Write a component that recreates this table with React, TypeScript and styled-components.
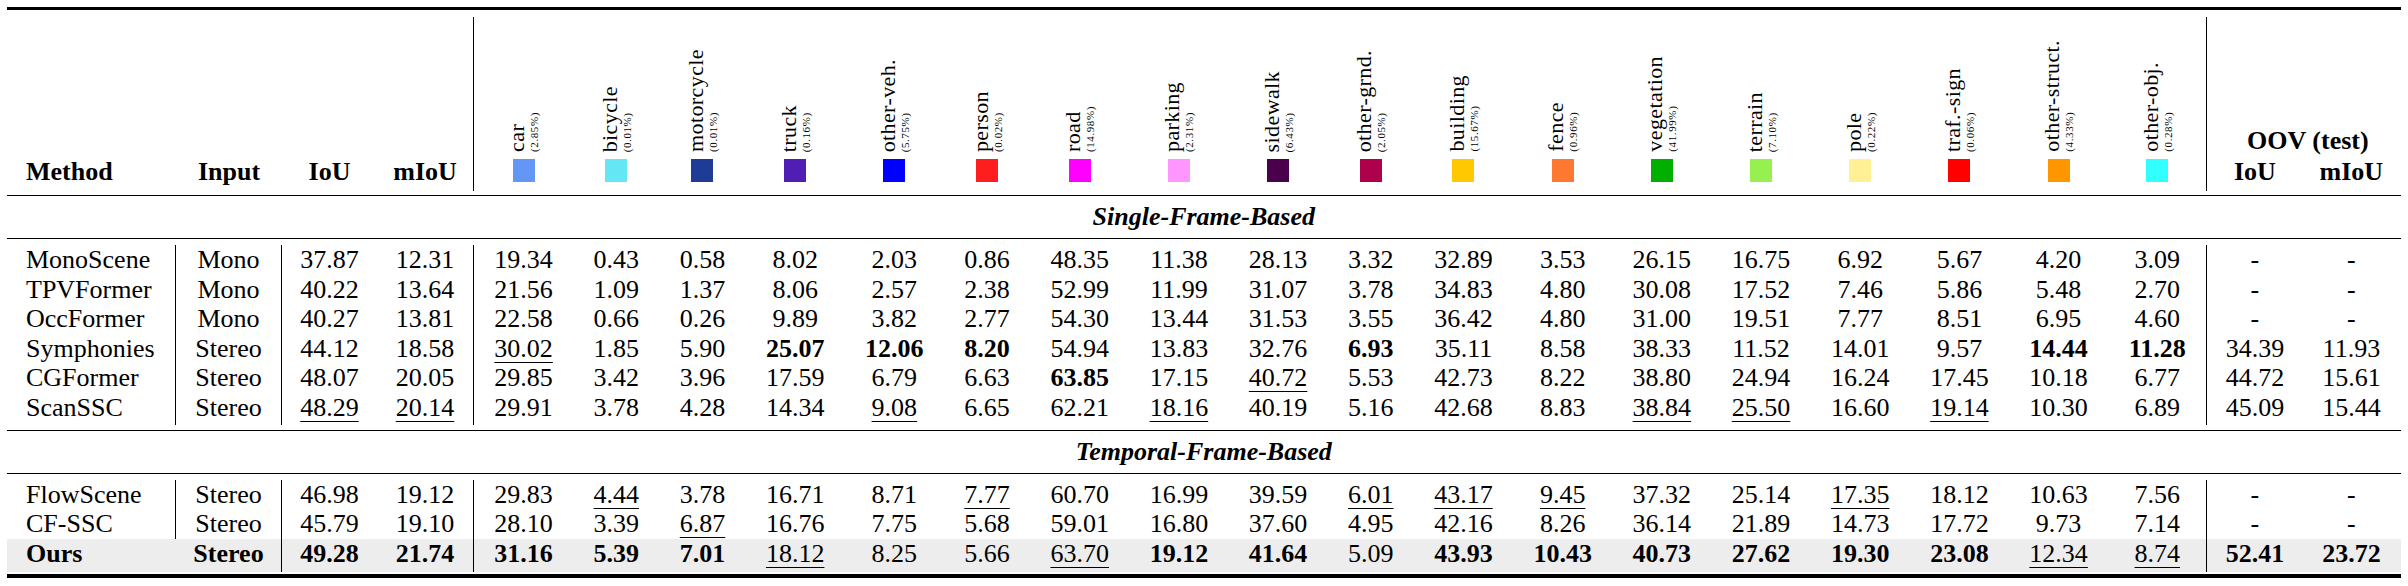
import React from "react";
import styled, { createGlobalStyle } from "styled-components";

const GlobalStyle = createGlobalStyle`
  html, body {
    margin: 0;
    padding: 0;
    background: #fff;
  }
  body {
    font-family: "Liberation Serif", "DejaVu Serif", serif;
    color: #000;
  }
`;

type ClassInfo = { name: string; pct: string; color: string; narrow?: boolean };

const classes: ClassInfo[] = [
  { name: "car", pct: "2.85", color: "#6496f5" },
  { name: "bicycle", pct: "0.01", color: "#64e6f5", narrow: true },
  { name: "motorcycle", pct: "0.01", color: "#1e3c96", narrow: true },
  { name: "truck", pct: "0.16", color: "#501eb4" },
  { name: "other-veh.", pct: "5.75", color: "#0000ff" },
  { name: "person", pct: "0.02", color: "#ff1e1e", narrow: true },
  { name: "road", pct: "14.98", color: "#ff00ff" },
  { name: "parking", pct: "2.31", color: "#ff96ff" },
  { name: "sidewalk", pct: "6.43", color: "#4b004b" },
  { name: "other-grnd.", pct: "2.05", color: "#af004b", narrow: true },
  { name: "building", pct: "15.67", color: "#ffc800" },
  { name: "fence", pct: "0.96", color: "#ff7832" },
  { name: "vegetation", pct: "41.99", color: "#00af00" },
  { name: "terrain", pct: "7.10", color: "#96f050" },
  { name: "pole", pct: "0.22", color: "#fff096" },
  { name: "traf.-sign", pct: "0.06", color: "#ff0000" },
  { name: "other-struct.", pct: "4.33", color: "#ff9600" },
  { name: "other-obj.", pct: "0.28", color: "#32ffff" },
];

// column widths: method, input, iou, miou, 18 classes, oov iou, oov miou
const WIDTHS = [169, 106, 95, 97, ...classes.map((c) => (c.narrow ? 86.2 : 99.2)), 95, 98];
const TEMPLATE = WIDTHS.map((w) => `${w}px`).join(" ");
const TOTAL = WIDTHS.reduce((a, b) => a + b, 0);

type Entry = {
  method: string;
  input: string;
  iou: string;
  miou: string;
  vals: string[];
  oov: [string, string];
};

// "b:" = bold, "u:" = underlined
const single: Entry[] = [
  {
    method: "MonoScene", input: "Mono", iou: "37.87", miou: "12.31",
    vals: ["19.34", "0.43", "0.58", "8.02", "2.03", "0.86", "48.35", "11.38", "28.13", "3.32", "32.89", "3.53", "26.15", "16.75", "6.92", "5.67", "4.20", "3.09"],
    oov: ["-", "-"],
  },
  {
    method: "TPVFormer", input: "Mono", iou: "40.22", miou: "13.64",
    vals: ["21.56", "1.09", "1.37", "8.06", "2.57", "2.38", "52.99", "11.99", "31.07", "3.78", "34.83", "4.80", "30.08", "17.52", "7.46", "5.86", "5.48", "2.70"],
    oov: ["-", "-"],
  },
  {
    method: "OccFormer", input: "Mono", iou: "40.27", miou: "13.81",
    vals: ["22.58", "0.66", "0.26", "9.89", "3.82", "2.77", "54.30", "13.44", "31.53", "3.55", "36.42", "4.80", "31.00", "19.51", "7.77", "8.51", "6.95", "4.60"],
    oov: ["-", "-"],
  },
  {
    method: "Symphonies", input: "Stereo", iou: "44.12", miou: "18.58",
    vals: ["u:30.02", "1.85", "5.90", "b:25.07", "b:12.06", "b:8.20", "54.94", "13.83", "32.76", "b:6.93", "35.11", "8.58", "38.33", "11.52", "14.01", "9.57", "b:14.44", "b:11.28"],
    oov: ["34.39", "11.93"],
  },
  {
    method: "CGFormer", input: "Stereo", iou: "48.07", miou: "20.05",
    vals: ["29.85", "3.42", "3.96", "17.59", "6.79", "6.63", "b:63.85", "17.15", "u:40.72", "5.53", "42.73", "8.22", "38.80", "24.94", "16.24", "17.45", "10.18", "6.77"],
    oov: ["44.72", "15.61"],
  },
  {
    method: "ScanSSC", input: "Stereo", iou: "u:48.29", miou: "u:20.14",
    vals: ["29.91", "3.78", "4.28", "14.34", "u:9.08", "6.65", "62.21", "u:18.16", "40.19", "5.16", "42.68", "8.83", "u:38.84", "u:25.50", "16.60", "u:19.14", "10.30", "6.89"],
    oov: ["45.09", "15.44"],
  },
];

const temporal: Entry[] = [
  {
    method: "FlowScene", input: "Stereo", iou: "46.98", miou: "19.12",
    vals: ["29.83", "u:4.44", "3.78", "16.71", "8.71", "u:7.77", "60.70", "16.99", "39.59", "u:6.01", "u:43.17", "u:9.45", "37.32", "25.14", "u:17.35", "18.12", "10.63", "7.56"],
    oov: ["-", "-"],
  },
  {
    method: "CF-SSC", input: "Stereo", iou: "45.79", miou: "19.10",
    vals: ["28.10", "3.39", "u:6.87", "16.76", "7.75", "5.68", "59.01", "16.80", "37.60", "4.95", "42.16", "8.26", "36.14", "21.89", "14.73", "17.72", "9.73", "7.14"],
    oov: ["-", "-"],
  },
];

const ours: Entry = {
  method: "b:Ours", input: "b:Stereo", iou: "b:49.28", miou: "b:21.74",
  vals: ["b:31.16", "b:5.39", "b:7.01", "u:18.12", "8.25", "5.66", "u:63.70", "b:19.12", "b:41.64", "5.09", "b:43.93", "b:10.43", "b:40.73", "b:27.62", "b:19.30", "b:23.08", "u:12.34", "u:8.74"],
  oov: ["b:52.41", "b:23.72"],
};

const Table = styled.div`
  width: ${TOTAL}px;
  margin: 7px 0 0 7px;
  font-family: "Liberation Serif", "DejaVu Serif", serif;
  font-size: 26px;
`;

const Rule = styled.div<{ $h: number }>`
  height: ${(p) => p.$h}px;
  background: #000;
`;

const HeadRow = styled.div`
  display: grid;
  grid-template-columns: ${TEMPLATE};
  padding: 7px 0 4px;
`;

const HeadCell = styled.div<{ $left?: boolean; $rule?: boolean }>`
  height: 174px;
  display: flex;
  flex-direction: column;
  justify-content: flex-end;
  align-items: ${(p) => (p.$left ? "flex-start" : "center")};
  padding: 0 0 4px ${(p) => (p.$left ? "19px" : "0")};
  box-sizing: border-box;
  border-right: ${(p) => (p.$rule ? "1px solid #000" : "none")};
  font-weight: 700;
  line-height: 30px;
`;

const ClassHead = styled.div<{ $rule?: boolean }>`
  height: 174px;
  display: flex;
  flex-direction: column;
  justify-content: flex-end;
  align-items: center;
  padding-bottom: 9px;
  box-sizing: border-box;
  border-right: ${(p) => (p.$rule ? "1px solid #000" : "none")};
`;

const Label = styled.div`
  writing-mode: vertical-rl;
  transform: rotate(180deg);
  display: flex;
  flex-direction: column;
  align-items: flex-start;
`;

const LabelName = styled.span`
  font-size: 22px;
  line-height: 22px;
  letter-spacing: 0.4px;
`;

const LabelPct = styled.span`
  font-size: 11px;
  line-height: 13px;
  letter-spacing: 0.6px;
`;

const Swatch = styled.div<{ $color: string }>`
  width: 22px;
  height: 23px;
  margin-top: 7px;
  background: ${(p) => p.$color};
`;

const OovHead = styled.div`
  grid-column: span 2;
  height: 174px;
  display: flex;
  flex-direction: column;
  justify-content: flex-end;
  padding-bottom: 4px;
  box-sizing: border-box;
  font-weight: 700;
  line-height: 30px;
  text-align: center;
`;

const OovTitle = styled.div`
  margin-bottom: 1px;
  padding-left: 8px;
`;

const OovSub = styled.div`
  display: grid;
  grid-template-columns: 95px 98px;
`;

const Section = styled.div`
  height: 42px;
  display: flex;
  align-items: center;
  justify-content: center;
  font-weight: 700;
  font-style: italic;
`;

const Block = styled.div<{ $top: number; $bottom: number }>`
  padding: ${(p) => p.$top}px 0 ${(p) => p.$bottom}px;
`;

const Row = styled.div<{ $shade?: boolean; $pb?: number }>`
  display: grid;
  grid-template-columns: ${TEMPLATE};
  background: ${(p) => (p.$shade ? "#ededed" : "transparent")};
  & > * {
    padding-bottom: ${(p) => p.$pb ?? 0}px;
  }
`;

const Cell = styled.div<{ $left?: boolean; $rule?: boolean }>`
  line-height: 29.6px;
  text-align: ${(p) => (p.$left ? "left" : "center")};
  padding-left: ${(p) => (p.$left ? "19px" : "0")};
  box-sizing: border-box;
  border-right: ${(p) => (p.$rule ? "1px solid #000" : "none")};
  white-space: nowrap;
`;

const Num = styled.span<{ $bold?: boolean; $under?: boolean }>`
  font-weight: ${(p) => (p.$bold ? 700 : 400)};
  text-decoration: ${(p) => (p.$under ? "underline" : "none")};
  text-decoration-thickness: 1px;
  text-underline-offset: 5px;
`;

const Val = ({ v }: { v: string }) => {
  const bold = v.startsWith("b:");
  const under = v.startsWith("u:");
  const text = bold || under ? v.slice(2) : v;
  return (
    <Num $bold={bold} $under={under}>
      {text}
    </Num>
  );
};

const DataRow = ({
  e,
  methodRule = true,
  shade,
  pb,
}: {
  e: Entry;
  methodRule?: boolean;
  shade?: boolean;
  pb?: number;
}) => (
  <Row $shade={shade} $pb={pb}>
    <Cell $left $rule={methodRule}>
      <Val v={e.method} />
    </Cell>
    <Cell $rule>
      <Val v={e.input} />
    </Cell>
    <Cell>
      <Val v={e.iou} />
    </Cell>
    <Cell $rule>
      <Val v={e.miou} />
    </Cell>
    {e.vals.map((v, i) => (
      <Cell key={i} $rule={i === e.vals.length - 1}>
        <Val v={v} />
      </Cell>
    ))}
    <Cell>
      <Val v={e.oov[0]} />
    </Cell>
    <Cell>
      <Val v={e.oov[1]} />
    </Cell>
  </Row>
);

export default function App() {
  return (
    <>
      <GlobalStyle />
      <Table>
        <Rule $h={3} />
        <HeadRow>
          <HeadCell $left>Method</HeadCell>
          <HeadCell>Input</HeadCell>
          <HeadCell>IoU</HeadCell>
          <HeadCell $rule>mIoU</HeadCell>
          {classes.map((c, i) => (
            <ClassHead key={c.name} $rule={i === classes.length - 1}>
              <Label>
                <LabelName>{c.name}</LabelName>
                <LabelPct>({c.pct}%)</LabelPct>
              </Label>
              <Swatch $color={c.color} />
            </ClassHead>
          ))}
          <OovHead>
            <OovTitle>OOV (test)</OovTitle>
            <OovSub>
              <div>IoU</div>
              <div>mIoU</div>
            </OovSub>
          </OovHead>
        </HeadRow>
        <Rule $h={1} />
        <Section>Single-Frame-Based</Section>
        <Rule $h={1} />
        <Block $top={6} $bottom={5}>
          {single.map((e, i) => (
            <DataRow key={e.method} e={e} pb={i === single.length - 1 ? 2 : 0} />
          ))}
        </Block>
        <Rule $h={1} />
        <Section>Temporal-Frame-Based</Section>
        <Rule $h={1} />
        <Block $top={6} $bottom={2}>
          {temporal.map((e) => (
            <DataRow key={e.method} e={e} />
          ))}
          <DataRow e={ours} methodRule={false} shade pb={3.4} />
        </Block>
        <Rule $h={4} />
      </Table>
    </>
  );
}
